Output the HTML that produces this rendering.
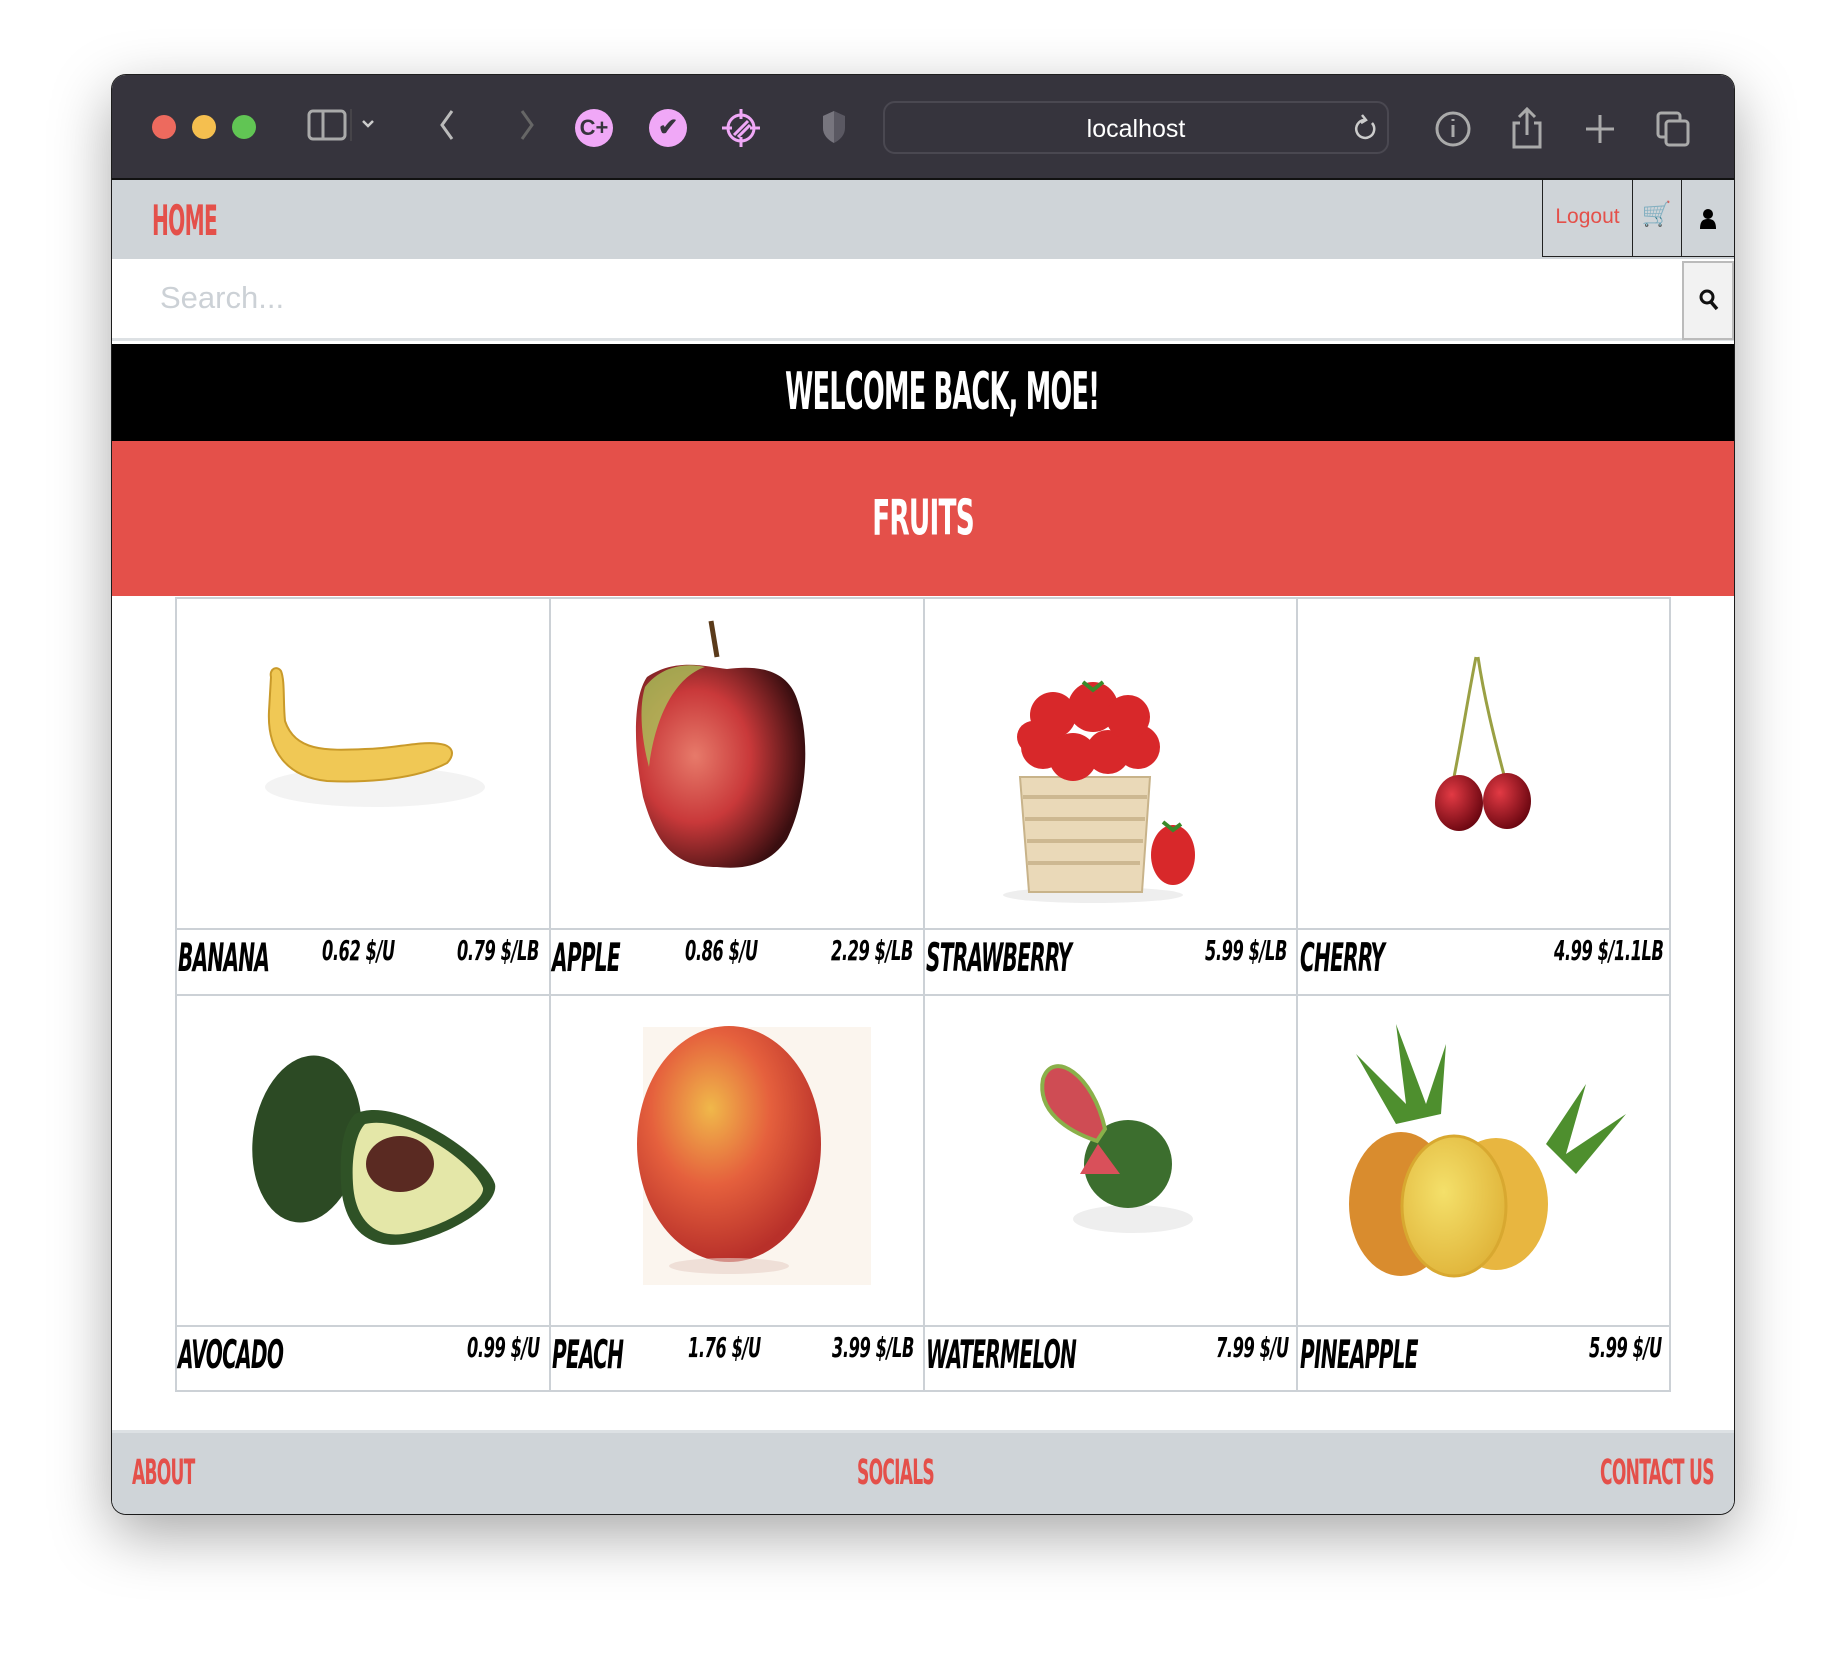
<!DOCTYPE html>
<html><head><meta charset="utf-8"><style>
*{margin:0;padding:0;box-sizing:border-box}
body{width:1846px;height:1662px;background:#fff;position:relative;overflow:hidden;font-family:"Liberation Sans",sans-serif}
.win{position:absolute;left:112px;top:75px;width:1622px;height:1439px;border-radius:14px;overflow:hidden;background:#fff;box-shadow:0 20px 60px rgba(0,0,0,.35),0 0 0 1px #222}
.tb{position:absolute;left:0;top:0;width:100%;height:105px;background:#36343d;border-bottom:2px solid #111}
.dot{position:absolute;top:40px;width:24px;height:24px;border-radius:50%}
.abs{position:absolute}
.cond{font-family:"DejaVu Sans Condensed","Liberation Sans",sans-serif;font-weight:bold;white-space:nowrap}
.nav{position:absolute;left:0;top:105px;width:100%;height:79px;background:#cfd4d8}
.red{color:#e4504a}
.cell{position:absolute;border:2px solid #ccd1d6;background:#fff}
.lbl{position:absolute;font-family:"DejaVu Sans Condensed","Liberation Sans",sans-serif;font-weight:bold;font-style:italic;color:#000;white-space:nowrap;transform-origin:left top}
.nm{font-size:31px;letter-spacing:-1px;transform:scale(0.72,1.25)}
.pr{font-size:22px;letter-spacing:-0.5px;transform:scale(0.82,1.25)}
.ctr{position:absolute;left:0;width:100%;text-align:center}
.ctr span{display:inline-block}
</style></head><body>
<div class="win">
 <div class="tb">
  <div class="dot" style="left:40px;background:#ed6a5e"></div>
  <div class="dot" style="left:80px;background:#f5bf4f"></div>
  <div class="dot" style="left:120px;background:#61c554"></div>
  <svg class="abs" style="left:195px;top:32px" width="80" height="40" viewBox="0 0 80 40"><rect x="2" y="4" width="36" height="28" rx="4" fill="none" stroke="#aaa" stroke-width="3"/><line x1="16" y1="4" x2="16" y2="32" stroke="#aaa" stroke-width="3"/><line x1="44" y1="2" x2="44" y2="34" stroke="#555" stroke-width="1"/><path d="M56 14l5 5 5-5" stroke="#ccc" stroke-width="2.5" fill="none"/></svg>
  <svg class="abs" style="left:320px;top:30px" width="120" height="40"><path d="M20 6L10 20l10 14" stroke="#bbb" stroke-width="3" fill="none"/><path d="M90 6l10 14-10 14" stroke="#666" stroke-width="3" fill="none"/></svg>
  <div class="abs" style="left:463px;top:34px;width:38px;height:38px;border-radius:50%;background:#f0a8f7;color:#36343d;font-weight:bold;font-size:22px;text-align:center;line-height:38px">C+</div>
  <div class="abs" style="left:537px;top:34px;width:38px;height:38px;border-radius:50%;background:#f0a8f7;color:#36343d;font-weight:bold;font-size:24px;text-align:center;line-height:38px">✔</div>
  <svg class="abs" style="left:608px;top:32px" width="42" height="42" viewBox="0 0 42 42"><circle cx="21" cy="21" r="13" fill="none" stroke="#f0a8f7" stroke-width="3"/><path d="M21 2v10M21 30v10M2 21h10M30 21h10M14 28l14-14M18 30l12-12" stroke="#f0a8f7" stroke-width="3"/></svg>
  <svg class="abs" style="left:708px;top:34px" width="28" height="36"><path d="M14 2L3 7v12c0 7 5 12 11 15 6-3 11-8 11-15V7z" fill="#5a5862"/><path d="M14 2v32c-6-3-11-8-11-15V7z" fill="#77757e"/></svg>
  <div class="abs" style="left:771px;top:26px;width:506px;height:53px;border:2px solid #4a4851;border-radius:12px"></div>
  <div class="abs" style="left:771px;top:32px;width:506px;text-align:center;color:#fff;font-size:25px;line-height:44px">localhost</div>
  <svg class="abs" style="left:1240px;top:38px" width="28" height="30"><path d="M20 10a9 9 0 1 1-8-3" stroke="#ccc" stroke-width="2.5" fill="none"/><path d="M10 2l4 5-5 3" stroke="#ccc" stroke-width="2.5" fill="none"/></svg>
  <svg class="abs" style="left:1320px;top:30px" width="260" height="46"><circle cx="21" cy="24" r="16" fill="none" stroke="#aaa" stroke-width="3"/><path d="M21 20v12M21 14v2" stroke="#aaa" stroke-width="3"/><path d="M88 18h-6v24h26V18h-6M95 4v26M87 12l8-8 8 8" stroke="#aaa" stroke-width="3" fill="none"/><path d="M168 10v28M154 24h28" stroke="#aaa" stroke-width="3"/><rect x="226" y="8" width="22" height="24" rx="3" fill="none" stroke="#aaa" stroke-width="3"/><rect x="234" y="16" width="22" height="24" rx="3" fill="#36343d" stroke="#aaa" stroke-width="3"/></svg>
 </div>
 <div class="nav">
  <div class="abs cond red" style="left:40px;top:16px;font-size:32px;transform:scale(0.7,1.3);transform-origin:left top;letter-spacing:-1px">HOME</div>
  <div class="abs" style="left:1430px;top:0;width:91px;height:77px;border:1.5px solid #222;border-top:none;color:#e4504a;font-size:21px;text-align:center;line-height:74px">Logout</div>
  <div class="abs" style="left:1520px;top:0;width:50px;height:77px;border:1.5px solid #222;border-top:none;border-left:none;text-align:center;line-height:70px;font-size:24px;color:#888">🛒</div>
  <div class="abs" style="left:1569px;top:0;width:53px;height:77px;border-left:1.5px solid #222;border-bottom:1.5px solid #222"></div>
  <svg class="abs" style="left:1587px;top:28px" width="18" height="22"><circle cx="9" cy="6" r="5" fill="#000"/><path d="M1 21c0-8 3-10 8-10s8 2 8 10z" fill="#000"/></svg>
 </div>
 <div class="abs" style="left:0;top:184px;width:100%;height:82px;background:#fff;border-bottom:3px solid #dde1e4"></div>
 <div class="abs" style="left:48px;top:205px;font-size:31px;color:#ccd1d6">Search...</div>
 <div class="abs" style="left:1570px;top:186px;width:52px;height:79px;background:#f2f2f2;border:2px solid #bbb"></div>
 <svg class="abs" style="left:1586px;top:213px" width="22" height="24"><circle cx="9" cy="9" r="6" fill="none" stroke="#111" stroke-width="3"/><path d="M13 14l6 7" stroke="#111" stroke-width="3.5"/></svg>
 <div class="abs" style="left:0;top:269px;width:100%;height:97px;background:#000"></div>
 <div class="ctr cond" style="top:287px;color:#fff;font-size:40px;padding-left:38px"><span style="transform:scale(0.71,1.3);transform-origin:center top;letter-spacing:-1px">WELCOME BACK, MOE!</span></div>
 <div class="abs" style="left:0;top:366px;width:100%;height:155px;background:#e4504a"></div>
 <div class="ctr cond" style="top:414px;color:#fff;font-size:38px"><span style="transform:scale(0.77,1.3);transform-origin:center top;letter-spacing:-1px">FRUITS</span></div>
 <div class="abs" style="left:0;top:1355px;width:100%;height:3px;background:#dde1e4"></div>
 <div class="abs" style="left:0;top:1358px;width:100%;height:81px;background:#cfd4d8"></div>
 <div class="abs cond red" style="left:20px;top:1378px;font-size:26px;letter-spacing:-1px;transform:scale(0.73,1.35);transform-origin:left top">ABOUT</div>
 <div class="abs cond red" style="left:745px;top:1378px;font-size:26px;letter-spacing:-1px;transform:scale(0.73,1.35);transform-origin:left top">SOCIALS</div>
 <div class="abs cond red" style="right:20px;top:1378px;font-size:26px;letter-spacing:-1px;transform:scale(0.73,1.35);transform-origin:right top">CONTACT US</div>
</div>

<div class="cell" style="left:175px;top:597px;width:376px;height:399px"></div>
<div class="cell" style="left:549px;top:597px;width:376px;height:399px"></div>
<div class="cell" style="left:923px;top:597px;width:375px;height:399px"></div>
<div class="cell" style="left:1296px;top:597px;width:375px;height:399px"></div>
<div class="cell" style="left:175px;top:994px;width:376px;height:398px"></div>
<div class="cell" style="left:549px;top:994px;width:376px;height:398px"></div>
<div class="cell" style="left:923px;top:994px;width:375px;height:398px"></div>
<div class="cell" style="left:1296px;top:994px;width:375px;height:398px"></div>
<div class="abs" style="left:175px;top:928px;width:1496px;height:2px;background:#ccd1d6"></div>
<div class="abs" style="left:175px;top:1325px;width:1496px;height:2px;background:#ccd1d6"></div>

<svg class="abs" style="left:175px;top:597px" width="1496" height="795" viewBox="0 0 1496 795">
 <defs>
  <radialGradient id="ap" cx="35%" cy="45%" r="65%"><stop offset="0" stop-color="#e77a6a"/><stop offset=".5" stop-color="#c9393a"/><stop offset="1" stop-color="#3a0e10"/></radialGradient>
  <radialGradient id="pe" cx="40%" cy="35%" r="65%"><stop offset="0" stop-color="#f0b84a"/><stop offset=".5" stop-color="#e5603d"/><stop offset="1" stop-color="#b8302a"/></radialGradient>
  <radialGradient id="ch" cx="35%" cy="35%" r="70%"><stop offset="0" stop-color="#e23a44"/><stop offset="1" stop-color="#6a0610"/></radialGradient>
  <radialGradient id="pi" cx="40%" cy="40%" r="65%"><stop offset="0" stop-color="#f4e06a"/><stop offset="1" stop-color="#e0b43a"/></radialGradient>
 </defs>
 <ellipse cx="200" cy="190" rx="110" ry="20" fill="#f3f3f3"/>
 <path d="M96 80c-2-8 6-12 10-6 4 10 2 30 4 50 10 30 40 30 80 28 30 0 60-10 80-4 10 4 8 12 2 18-30 16-80 20-120 18-40-4-60-30-58-70z" fill="#f0c855" stroke="#c99a2a" stroke-width="2"/>
 <g transform="translate(374,0)">
  <path d="M98 80c30-20 60-10 80-8 30-4 60 0 70 30 14 40 10 100-10 140-20 30-50 30-70 28-40 0-60-20-74-70-10-50-10-100 4-120z" fill="url(#ap)"/>
  <path d="M96 90c15-20 40-25 60-20-30 10-50 50-56 100-8-30-10-60-4-80z" fill="#a9c45a" opacity=".8"/>
  <path d="M168 60l-6-36" stroke="#5a3a1a" stroke-width="5"/>
 </g>
 <g transform="translate(748,0)">
  <ellipse cx="170" cy="298" rx="90" ry="8" fill="#eee"/>
  <path d="M97 180h130l-8 115H106z" fill="#ead9b8" stroke="#c8b38a" stroke-width="2"/>
  <path d="M100 200h124M102 222h120M104 244h116M105 266h112" stroke="#cdb891" stroke-width="4"/>
  <g fill="#d8282a">
   <circle cx="120" cy="150" r="22"/><circle cx="150" cy="160" r="24"/><circle cx="185" cy="155" r="22"/><circle cx="215" cy="150" r="22"/>
   <circle cx="130" cy="118" r="23"/><circle cx="170" cy="110" r="25"/><circle cx="205" cy="120" r="22"/><circle cx="110" cy="140" r="16"/>
   <ellipse cx="250" cy="258" rx="22" ry="30"/>
  </g>
  <path d="M160 85l10 8 10-8M240 225l10 8 8-6" stroke="#3a8a2a" stroke-width="4" fill="none"/>
 </g>
 <g transform="translate(1121,0)">
  <path d="M180 60c-8 40-14 80-22 120M182 60c6 40 16 80 26 118" stroke="#9aa044" stroke-width="3" fill="none"/>
  <ellipse cx="163" cy="206" rx="24" ry="28" fill="url(#ch)"/>
  <ellipse cx="211" cy="204" rx="24" ry="28" fill="url(#ch)"/>
 </g>
 <g transform="translate(0,397)">
  <ellipse cx="132" cy="145" rx="54" ry="84" fill="#2c4a24" transform="rotate(8 132 145)"/>
  <path d="M180 120c40-20 130 40 140 70 4 20-40 50-90 60-40 6-62-20-64-60-2-40 4-60 14-70z" fill="#2f5226"/>
  <path d="M190 130c40-10 110 40 118 64 2 14-40 40-80 46-30 4-48-16-50-50-2-30 4-52 12-60z" fill="#e4e7a8"/>
  <ellipse cx="225" cy="170" rx="34" ry="28" fill="#5a2a22"/>
 </g>
 <g transform="translate(374,397)">
  <rect x="94" y="33" width="228" height="258" fill="#fbf5ee"/>
  <ellipse cx="180" cy="150" rx="92" ry="118" fill="url(#pe)"/>
  <ellipse cx="180" cy="272" rx="60" ry="8" fill="#e8d0c8" opacity=".6"/>
 </g>
 <g transform="translate(748,397)">
  <ellipse cx="210" cy="225" rx="60" ry="14" fill="#eee"/>
  <circle cx="205" cy="170" r="44" fill="#3c6e2e"/>
  <path d="M175 150l22 30h-40z" fill="#d9505a"/>
  <path d="M120 85c10-30 50-5 62 50l-8 12c-30-10-60-30-54-62z" fill="#cf4c54" stroke="#8ab04a" stroke-width="4"/>
 </g>
 <g transform="translate(1121,397)">
  <path d="M100 130l-40-70 50 50-10-80 30 80 20-60-5 70" fill="#4e8f2e"/>
  <path d="M250 150l40-60-20 70 60-40-50 60" fill="#4e8f2e"/>
  <ellipse cx="105" cy="210" rx="52" ry="72" fill="#d98c2e"/>
  <ellipse cx="200" cy="210" rx="52" ry="66" fill="#e8b640"/>
  <ellipse cx="158" cy="212" rx="52" ry="70" fill="url(#pi)" stroke="#d8a830" stroke-width="3"/>
 </g>
</svg>

<div class="lbl nm" style="left:178px;top:936px">BANANA</div>
<div class="lbl pr" style="left:322px;top:936px">0.62 $/U</div>
<div class="lbl pr" style="left:457px;top:936px">0.79 $/LB</div>
<div class="lbl nm" style="left:552px;top:936px">APPLE</div>
<div class="lbl pr" style="left:685px;top:936px">0.86 $/U</div>
<div class="lbl pr" style="left:831px;top:936px">2.29 $/LB</div>
<div class="lbl nm" style="left:926px;top:936px">STRAWBERRY</div>
<div class="lbl pr" style="left:1205px;top:936px">5.99 $/LB</div>
<div class="lbl nm" style="left:1300px;top:936px">CHERRY</div>
<div class="lbl pr" style="left:1554px;top:936px">4.99 $/1.1LB</div>
<div class="lbl nm" style="left:178px;top:1333px">AVOCADO</div>
<div class="lbl pr" style="left:467px;top:1333px">0.99 $/U</div>
<div class="lbl nm" style="left:552px;top:1333px">PEACH</div>
<div class="lbl pr" style="left:688px;top:1333px">1.76 $/U</div>
<div class="lbl pr" style="left:832px;top:1333px">3.99 $/LB</div>
<div class="lbl nm" style="left:926px;top:1333px">WATERMELON</div>
<div class="lbl pr" style="left:1216px;top:1333px">7.99 $/U</div>
<div class="lbl nm" style="left:1300px;top:1333px">PINEAPPLE</div>
<div class="lbl pr" style="left:1589px;top:1333px">5.99 $/U</div>
</body></html>
